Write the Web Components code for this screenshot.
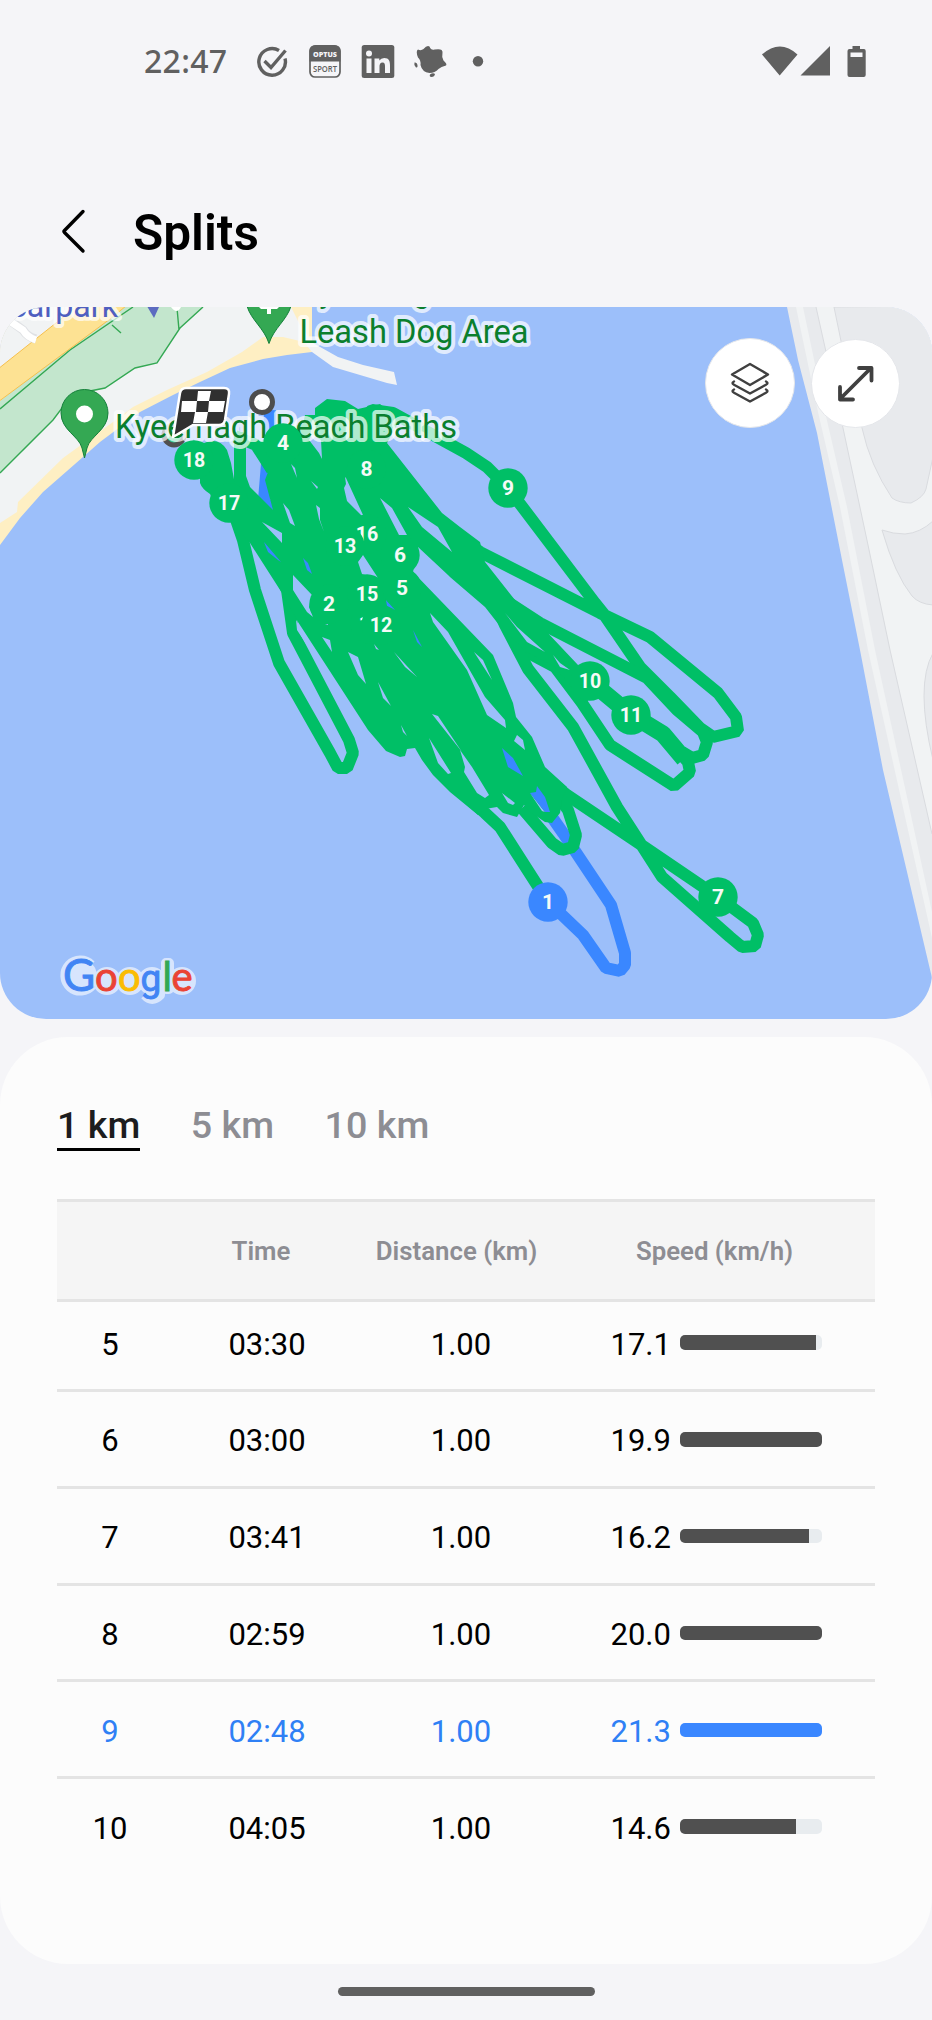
<!DOCTYPE html>
<html lang="en">
<head>
<meta charset="utf-8">
<title>Splits</title>
<style>
body{margin:0;background:#f5f5f8;font-family:Roboto,"Liberation Sans",sans-serif}
</style>
</head>
<body>
<splits-screen></splits-screen>
<script>
const define=(name,html,setup)=>customElements.define(name,class extends HTMLElement{
  constructor(){super();this.attachShadow({mode:'open'}).innerHTML=html;}
  connectedCallback(){if(setup)setup(this,this.shadowRoot);}
});

define('status-bar',`<style>
:host{display:flex;height:95px;box-sizing:border-box;padding:32px 65px 0 144px;align-items:flex-start;color:#606060}
.time{font:500 32px/58px "Noto Sans",sans-serif;letter-spacing:.3px;width:113px;height:60px}
svg{display:block;flex:none}
.sp{flex:1}
</style>
<div class="time">22:47</div>
<svg width="230" height="60" viewBox="257 32 230 60">
 <g fill="none" stroke="#606060" stroke-width="3.4"><path d="M279 50.5A13.3 13.3 0 1 0 285 58.5"/><path d="M264.5 61l6.5 6.500L285.500 50.500"/></g>
 <rect x="310" y="46" width="30" height="31" rx="5" fill="#f5f5f8" stroke="#606060" stroke-width="1.700"/>
 <path d="M309.500 61.500V51a6 6 0 0 1 6-6h19a6 6 0 0 1 6 6v10.500z" fill="#606060"/>
 <text x="313" y="56.800" font-family="Open Sans,sans-serif" font-weight="800" font-size="7" fill="#f5f5f8" textLength="24" lengthAdjust="spacingAndGlyphs">OPTUS</text>
 <text x="313" y="71.500" font-family="Open Sans,sans-serif" font-weight="600" font-size="8" fill="#606060" textLength="24" lengthAdjust="spacingAndGlyphs">SPORT</text>
 <rect x="361.700" y="45" width="32.600" height="33" rx="2.500" fill="#606060"/>
 <g fill="#f5f5f8"><circle cx="369" cy="53.500" r="3"/><path d="M366.500 58.500h5V73h-5zM374.500 58.500h4.800v2q1.700-2.500 4.900-2.500c5 0 5.800 3.500 5.800 7.500V73h-5v-6.500c0-2-.2-4-2.500-4s-3 1.700-3 4V73h-5z"/></g>
 <path d="M418 49.500Q421 51 423.500 49 427 45 429.500 46.500 431 50.500 434.500 49.500 443 48 442.500 52.500 441.500 57 443.500 60.500 447.500 64 446 65.500 441 66.500 438.500 69 435 73 429.500 73 422 72 420.500 65 421 60 418 57.500 415.500 51 418 49.500zM414.500 62.500Q417 62 417.500 65 418 68 416 67.500 413.500 65 414.500 62.500zM430 74.500Q433 72.500 435 74 434.500 77 431.500 77 429 76.500 430 74.500z" fill="#606060"/>
 <circle cx="478" cy="61.300" r="5.200" fill="#606060"/>
</svg>
<div class="sp"></div>
<svg width="106" height="60" viewBox="761 32 106 60" fill="#606060"><path d="M762 54.500Q780 38.500 797.500 54.500L779.700 75.500zM830 46v29.500h-29.500zM852.500 49v-3h7.500v3h4q1.700 0 1.700 2v24q0 2-2 2H849.500q-2 0-2-2V51q0-2 2-2z"/><path d="M850.500 52.500h12v4.500h-12z" fill="#f5f5f8"/></svg>`);

define('title-bar',`<style>
:host{display:flex;height:212px;box-sizing:border-box;padding:106px 0 0 60px;align-items:flex-start}
svg{display:block;width:73px;height:60px}
h1{margin:0;font-size:49.500px;line-height:65px;font-weight:600;color:#000;height:60px}
</style>
<svg viewBox="60 201 73 60" fill="none" stroke="#000" stroke-width="3.400" stroke-linecap="round" stroke-linejoin="round"><path d="M83 211.500L64.500 230.500Q63.500 231.500 64.500 232.500L83 251"/></svg>
<h1><slot></slot></h1>`);

define('round-button',`<style>
:host{display:grid;place-items:center;width:88px;height:88px;border-radius:50%;background:#fff;border:1px solid #e4e6ea}
svg{display:block}
</style><slot></slot>`);

const G='#00bf66',B='#3a87ff',W='#9cbffa';
const marks=[[18,194,460],[17,229,503],[16,367,534],[15,367,594],[14,370,624],[13,345,546],[12,381,625],[11,631,715],[10,590,681],[9,508,488],[8,366.500,469],[7,718,897],[6,400,555],[5,402,588],[4,283,443],[2,329,604],[1,548,902]];
define('route-map',`<style>
:host{display:block;position:relative;height:712px;border-radius:46px;overflow:hidden;background:${W}}
svg.m{display:block;width:932px;height:712px}
round-button{position:absolute}
.a{left:705px;top:31px}.b{left:811px;top:32px;width:87px;height:87px}
</style>
<svg class="m" viewBox="0 307 932 712" font-family="Roboto,sans-serif">
 <path fill="#e8eaed" d="M787 307L798 360 817 433 842 560 860 650 883 770 932 978V307z"/>
 <path fill="#f1f3f4" d="M816 307L843 428 868 545 890 650 932 834V307zM796 307L818 412 840 507 868 650 932 938V912L875 650 847 507 825 412 803 307z"/>
 <path fill="none" stroke="#d9dbdf" d="M816 307L843 428 868 545 890 650 932 834"/>
 <path fill="#e8eaed" stroke="#d9dbdf" d="M834 307L841 341 862 428Q870 465 892 498 899 503 911 503 924 497 926 489L933 457V306zM882 530Q893 534 905 534 920 533 933 521V605Q919 604 912 596 895 575 882 530zM933 653Q915 685 933 760z"/>
 <path fill="#feefc3" d="M0 307H312V352L287 355 263 359 230 368 200 382 173 395 140 412 100 442 83 457 43 492 20 518 0 545z"/>
 <path fill="#f1f3f4" d="M0 307H291L300 325 313 343 338 357 363 365 394 372 397 385 387 383 333 367 312 352 304 342 283 337H263L242 352 207 372 167 390 133 407 113 422 63 458 18 502 17 512 0 523z"/>
 <path fill="#c3e6cd" d="M0 401L70 345 125 307H203L180 328 157 363 135 368 105 388 90 391 62 408 53 420 0 473z"/>
 <path fill="none" stroke="#34a853" stroke-width="1.400" d="M0 409L70 350 133 307M203 307L180 328 157 363 135 368 105 388 90 391 62 408 53 420 0 473M177 308L179 330M112 325L121 333"/>
 <path fill="#fde293" stroke="#f6bf4b" d="M-2 369L66 315 77 306H126L110 319 -2 402z"/>
 <path fill="none" stroke="#dfe1e4" stroke-width="9" d="M12 322L23 330Q27 337 36 339"/><path fill="none" stroke="#fff" stroke-width="7" d="M11 322L23 330Q27 337 36 340"/><path fill="#fff" d="M171 307h10q-4 8-10 0z"/>
 <path fill="#5c6bc0" d="M147.500 307h11.500l-5 11z"/>
 <g fill="#34a853" stroke="#14803a"><path d="M84.500 458L82 448C79 436 61 430 61 413a23.500 23.500 0 0 1 47 0C108 430 90 436 87 448z"/><path d="M269 343.500C264 328 251 320 247 306h44C287 320 274 328 269 343.500z"/></g>
 <circle cx="84.500" cy="414" r="8.500" fill="#fff"/><path d="M258 306h22l-3 3h-6v5h-4v-5h-6z" fill="#fff"/>

 <path fill="none" stroke="${B}" stroke-width="12" stroke-linejoin="bevel" d="M270 410L269 440 264 500 300 560M502 748L540 800 563 833 611 905 625 953V965L620 971 606 968 583 935 560 913"/>
 <g fill="none" stroke="${G}" stroke-width="12" stroke-linejoin="bevel">
  <path d="M548 902L500 827 485 813 452 784 440 768"/>
  <path d="M362 420L372 410 393 413 466 453 487 467 508 488 595 603 603 613 640 667 670 697 700 728 713 737 738 731 736 717 718 693 650 637 600 613 480 552 470 545"/>
  <path d="M500 597L540 623 647 678 677 710 703 732 707 742 703 755 692 758 682 752"/>
  <path stroke-width="17" d="M590 681L631 715M627 712L663 734 684 759"/>
  <path d="M660 730L688 762 690 772 674 786 610 745 582 703 555 667 523 650"/>
  <path d="M494 600L505 625 528 669 573 727 617 807 637 838 662 877 730 937 742 947 755 946 758 935 753 923 718 897 637 842 567 795 538 771"/>
  <path d="M522 808L552 843 562 850 573 847 576 835 568 810 550 785"/>
  <path d="M231 505L243 540 255 590 279 663 330 753 338 768 347 768 353 753 349 740 293 633 287 590 255 525"/>
  <path d="M240 432V482M235 436L256 445 272 470"/>
 </g>
 <path fill="${G}" d="M246 476L250 487 273 510 265 480 268 472 252 447 280 430 303 424 305 415 315 415 315 408 327 399 345 401 358 409 380 404 400 420 387 443 442 513 460 527 480 542 485 562 515 600 545 630 578 665 600 690 585 703 555 667 527 652 503 630 485 607 450 577 448 575 418 547 413 572 440 600 493 655 513 703 516 717 532 737 545 767 567 787 562 800 560 813 552 823 545 822 530 812 524 805 517 817 503 813 497 807 485 809 478 815 450 792 433 775 422 760 415 748 407 749 405 756 400 757 386 751 368 730 298 622 282 593 250 543 233 523 210 505 235 478z"/>
 <path fill="${G}" d="M200 445Q218 435 227 450L231 463 236 490 240 510H218L210 494Q202 489 200 483z"/>
 <g fill="${W}">
  <path d="M309 440L319 453 322 459 321 440 312 434zM291 464L297 478 295 468zM311 481L318 487 317 489zM345 477L346 478 363 515 362 516 347 501 344 488 346 484zM380 498L392 508 407 535H399zM408 507L438 527 452 552 422 527zM283 503L289 510 295 526 290 523zM316 505L320 508V520L324 532 319 519zM358 562L363 555 378 578 362 574zM262 522L282 533V543zM293 575L312 595 309 607 313 617 307 612 293 590zM296 620L316 653 310 650 297 630z"/>
  <path d="M322 637L330 640 332 652zM325 624h3v1zM348 652L358 657 366 684 358 675zM378 682L391 706 383 698zM394 652L417 677 405 667zM374 644L379 650 376 649zM401 725L407 736 403 732zM432 714L438 716 462 752zM429 738L451 773 448 774 438 763zM460 750L472 767 489 795 485 798 477 793 464 772 465 767zM502 793L515 803 513 805 508 803z"/>
  <path d="M430 613L448 632 485 697 505 720 506 728 487 715 467 670 433 622zM474 652L483 660 492 680zM517 735L523 740 525 750 514 741zM505 613L527 642 545 652 517 627zM553 655L560 663 570 670 560 667zM530 793L545 812 542 811z"/>
 </g>
 <g fill="${B}"><path d="M264 542L281 562 278 560 268 552zM303 558L308 563 312 574 307 570zM386 600L395 610 387 606zM413 630L422 647 417 642zM502 748L513 758 523 776 508 767zM537 786L545 797 550 812 545 812 530 793 536 792z"/></g>

 <circle cx="174" cy="435" r="10" fill="#38c98a" stroke="#505050" stroke-width="5"/>
 <g fill="#0b7f2e" stroke="#fff" stroke-opacity=".7" stroke-width="8" stroke-linejoin="round" paint-order="stroke" font-size="33">
  <text x="300" y="302" textLength="200" lengthAdjust="spacingAndGlyphs">Kyeemagh Off</text>
  <text x="299.500" y="342.500" textLength="229" lengthAdjust="spacingAndGlyphs">Leash Dog Area</text>
  <text x="115" y="437.500" textLength="342" lengthAdjust="spacingAndGlyphs">Kyeemagh Beach Baths</text>
  <text x="10" y="317" fill="#4f5fc0" textLength="108" lengthAdjust="spacingAndGlyphs">carpark</text>
 </g>
 <path d="M186 388H224Q230 388 229 394L225 420Q224 425 219 425H193L173 437 180 393Q181 388 186 388z" fill="#303030" stroke="#fff" stroke-width="2.500" stroke-linejoin="round"/>
 <path fill="#fff" d="M198 391h13l-2 10h-12zM182 401h15l-1 11h-15zM209 401h16l-2 11h-15zM195 412h13l-2 11h-13z"/>
 <circle cx="262" cy="402" r="10.500" fill="#fff" stroke="#4d4d4d" stroke-width="5"/>
 <g font-size="21" font-weight="700" text-anchor="middle">${marks.map(([n,x,y])=>`<circle cx="${x}" cy="${y}" r="19.700" fill="${n==1?B:G}"/><text x="${x}" y="${y+7}" fill="#f5faf7"${n>9?' textLength="22.500" lengthAdjust="spacingAndGlyphs"':''}>${n}</text>`).join('')}</g>
 <g font-family="Lato,sans-serif" font-size="40">
  <g fill="#d7e5fd" stroke="#d7e5fd" stroke-width="10" stroke-linejoin="round"><path d="M91 965A15 15 0 1 0 92 985"/><circle cx="80" cy="976" r="12"/><circle cx="107" cy="981" r="9"/><circle cx="130" cy="981" r="9"/><circle cx="152" cy="981" r="9"/><path d="M166 963h3v26h-3zM145 995Q152 1003 160 995V973"/><circle cx="182" cy="981" r="9"/></g>
  <text y="991" stroke-width=".9"><tspan x="63" font-size="44" fill="#4285f4" stroke="#4285f4">G</tspan><tspan x="95" fill="#ea4335" stroke="#ea4335">o</tspan><tspan x="118" fill="#fbbc04" stroke="#fbbc04">o</tspan><tspan x="140.500" font-family="Roboto" font-size="37" fill="#4285f4" stroke="#4285f4">g</tspan><tspan x="162.500" fill="#34a853" stroke="#34a853">l</tspan><tspan x="171.500" fill="#ea4335" stroke="#ea4335">e</tspan></text>
 </g>
</svg>
<round-button class="a"><svg width="44" height="44" viewBox="728 362 44 44" fill="none" stroke="#404040" stroke-width="2.400" stroke-linejoin="round" stroke-linecap="round"><path d="M750 365L768 375.500 750 386 732 375.500zM734 382.500Q731 384 734 385.700L750 394.500 766 385.700Q769 384 766 382.500M734 390.500Q731 392 734 393.700L750 402.500 766 393.700Q769 392 766 390.500"/></svg></round-button>
<round-button class="b"><svg width="44" height="44" viewBox="834 362 44 44" fill="none" stroke="#404040" stroke-width="3.800" stroke-linejoin="round" stroke-linecap="round"><path d="M840 399L871 368M859 368H871.500V380.500M840 387V399.500H853"/></svg></round-button>`);

define('split-tab',`<style>
:host{display:block;font-size:37.700px;line-height:56px;font-weight:500;color:#8d8d93;height:54px;border-bottom:3px solid transparent;box-sizing:border-box;white-space:nowrap}
:host([selected]){color:#1c1c1e;border-color:#000}
</style><slot></slot>`);

define('split-row',`<style>
:host{display:grid;grid-template-columns:106px 208px 180px 324px;height:96.800px;box-sizing:border-box;padding-top:5px;border-bottom:3px solid #e4e4e4;align-items:center;font-size:31px;line-height:36px;color:#000;--bar:#505050}
:host(:last-of-type){border-color:transparent}
:host([best]){color:#2f80f5;--bar:#3a87ff}
:host([first]){height:90px;padding:0 0 2px}
span{display:block;text-align:center}
.speed{display:flex;align-items:center;padding-left:59.500px}
.n{width:69.500px;text-align:left;white-space:nowrap}
.track{width:142px;height:14.500px;border-radius:5px;background:#e8ecef;overflow:hidden;margin-bottom:4px}
.fill{height:100%;background:var(--bar)}
</style>
<span class="i"></span><span class="t"></span><span class="d"></span>
<div class="speed"><span class="n"></span><div class="track"><div class="fill"></div></div></div>`,(h,r)=>{
  const [i,t,s,w]=h.dataset.v.split(' ');
  r.querySelector('.i').textContent=i;r.querySelector('.t').textContent=t;r.querySelector('.d').textContent='1.00';
  r.querySelector('.n').textContent=s;r.querySelector('.fill').style.width=w+'px';
});

define('splits-table',`<style>
:host{display:block}
header{display:grid;grid-template-columns:106px 196px 195px 321px;height:103px;box-sizing:border-box;border:solid #e4e4e4;border-width:3px 0;background:#f5f5f5;align-items:center;text-align:center;font-size:25.800px;line-height:30px;font-weight:600;color:#8d8d93;white-space:nowrap}
</style>
<header><span></span><span>Time</span><span>Distance (km)</span><span>Speed (km/h)</span></header><slot></slot>`);

define('splits-card',`<style>
:host{display:block;height:927px;box-sizing:border-box;margin-top:18px;padding:60px 57px 0;background:#fcfcfc;border-radius:68px}
nav{display:flex;gap:50.500px;height:102px}
</style>
<nav><split-tab selected>1 km</split-tab><split-tab>5 km</split-tab><split-tab>10 km</split-tab></nav>
<splits-table>
<split-row first data-v="5 03:30 17.1 136"></split-row>
<split-row data-v="6 03:00 19.9 142"></split-row>
<split-row data-v="7 03:41 16.2 129"></split-row>
<split-row data-v="8 02:59 20.0 142"></split-row>
<split-row best data-v="9 02:48 21.3 142"></split-row>
<split-row data-v="10 04:05 14.6 116"></split-row>
</splits-table>`);

define('home-handle',`<style>
:host{display:flex;justify-content:center;height:56px;box-sizing:border-box;padding-top:23px}
i{width:257px;height:9px;border-radius:5px;background:#606060}
</style><i></i>`);

define('splits-screen',`<style>
:host{display:block;width:932px;height:2020px;overflow:hidden}
</style>
<status-bar></status-bar><title-bar>Splits</title-bar><route-map></route-map><splits-card></splits-card><home-handle></home-handle>`);
</script>
</body>
</html>
